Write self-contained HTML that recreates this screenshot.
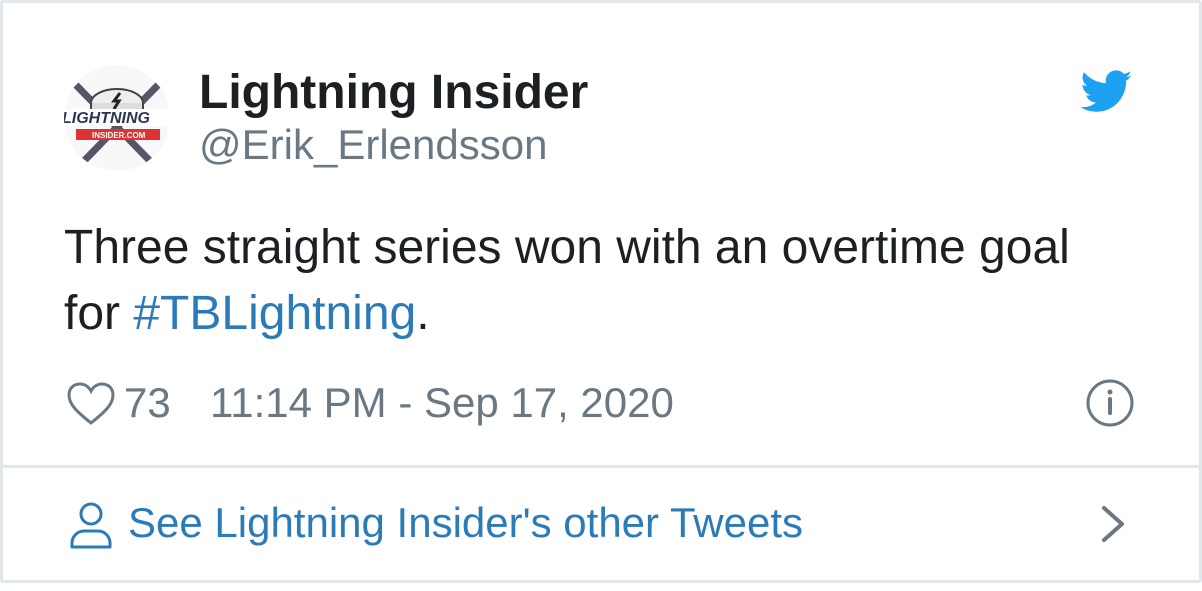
<!DOCTYPE html>
<html><head><style>
body{margin:0;background:#fff;width:1202px;height:591px;position:relative;font-family:"Liberation Sans",Arial,sans-serif;overflow:hidden}
.card{position:absolute;left:0;top:0;width:1196px;height:577px;border:3px solid #e1e8ed;border-radius:3px}
.div{position:absolute;left:3px;right:3px;top:465px;height:3px;background:#e1e8ed}
.t{position:absolute;white-space:nowrap;line-height:1}
</style></head><body>
<div class="card"></div>
<div class="div"></div>
<svg style="position:absolute;left:62px;top:63px" width="110" height="110" viewBox="0 0 110 110">
<defs><clipPath id="c"><circle cx="55" cy="55" r="53"/></clipPath></defs>
<g clip-path="url(#c)">
<rect width="110" height="110" fill="#f7f8fa"/>
<path d="M14 22 L90 100" stroke="#556" stroke-width="7"/>
<path d="M96 22 L20 100" stroke="#556" stroke-width="7"/>
<ellipse cx="55" cy="40" rx="26" ry="14" fill="#eee" stroke="#444" stroke-width="2"/>
<path d="M29 40 v8 a26 14 0 0 0 52 0 v-8" fill="#ddd" stroke="#444" stroke-width="2"/>
<path d="M58 30 l-6 8 h5 l-5 8" stroke="#222" stroke-width="3" fill="none"/>
<rect x="0" y="46" width="110" height="17" fill="#fff"/>
<text x="0" y="60" font-family="Liberation Sans" font-weight="bold" font-style="italic" font-size="16" fill="#2a3550">LIGHTNING</text>
<rect x="14" y="66" width="84" height="11" fill="#d33"/>
<text x="30" y="75" font-family="Liberation Sans" font-weight="bold" font-size="8" fill="#fff">INSIDER.COM</text>
</g></svg>
<div class="t" style="left:199px;top:69px;font-size:48px;font-weight:bold;color:#1c2022">Lightning Insider</div>
<div class="t" style="left:199px;top:124px;font-size:42px;color:#697882">@Erik_Erlendsson</div>
<svg style="position:absolute;left:1081px;top:70px" width="52" height="44" viewBox="0 0 24 20"><path fill="#1da1f2" d="M23.6 2.3c-.9.4-1.8.6-2.8.8 1-.6 1.8-1.5 2.1-2.7-.9.6-2 1-3.1 1.2C18.9.6 17.6 0 16.2 0c-2.7 0-4.8 2.2-4.8 4.8 0 .4 0 .8.1 1.1C7.4 5.7 3.8 3.8 1.4.8c-.4.7-.7 1.6-.7 2.4 0 1.7.9 3.2 2.2 4-.8 0-1.5-.2-2.2-.6v.1c0 2.3 1.7 4.3 3.9 4.7-.4.1-.8.2-1.3.2-.3 0-.6 0-.9-.1.6 1.9 2.4 3.3 4.5 3.4-1.7 1.3-3.7 2.1-6 2.1-.4 0-.8 0-1.2-.1 2.1 1.4 4.7 2.2 7.4 2.2 8.9 0 13.7-7.4 13.7-13.7v-.6c1-.7 1.8-1.5 2.4-2.5z"/></svg>
<div class="t" style="left:64px;top:215px;font-size:48px;color:#1c2022;line-height:66px">Three straight series won with an overtime goal<br>for <span style="color:#2b7bb9">#TBLightning</span>.</div>
<svg style="position:absolute;left:66px;top:381px" width="50" height="46" viewBox="0 0 50 46"><path d="M25 42 C10 30 3 23 3 14 C3 7 8 3 14 3 C19 3 23 6 25 10 C27 6 31 3 36 3 C42 3 47 7 47 14 C47 23 40 30 25 42Z" fill="none" stroke="#697882" stroke-width="3"/></svg>
<div class="t" style="left:124px;top:382px;font-size:42px;color:#697882">73</div>
<div class="t" style="left:210px;top:382px;font-size:42px;color:#697882">11:14 PM - Sep 17, 2020</div>
<svg style="position:absolute;left:1085px;top:378px" width="50" height="50" viewBox="0 0 50 50"><circle cx="25" cy="25" r="22" fill="none" stroke="#697882" stroke-width="3"/><circle cx="25" cy="14" r="2.5" fill="#697882"/><path d="M25 21v14" stroke="#697882" stroke-width="4" stroke-linecap="round"/></svg>
<svg style="position:absolute;left:68px;top:500px" width="46" height="50" viewBox="0 0 46 50"><circle cx="23" cy="14" r="10" fill="none" stroke="#2b7bb9" stroke-width="3"/><path d="M4 47 v-4 a12 12 0 0 1 12-12 h14 a12 12 0 0 1 12 12 v4 z" fill="none" stroke="#2b7bb9" stroke-width="3" stroke-linejoin="round"/></svg>
<div class="t" style="left:128px;top:502px;font-size:42px;color:#2b7bb9">See Lightning Insider's other Tweets</div>
<svg style="position:absolute;left:1100px;top:505px" width="30" height="38" viewBox="0 0 30 38"><path d="M4 3 L22 19 L4 35" fill="none" stroke="#697882" stroke-width="4" stroke-linecap="round" stroke-linejoin="round"/></svg>
</body></html>
